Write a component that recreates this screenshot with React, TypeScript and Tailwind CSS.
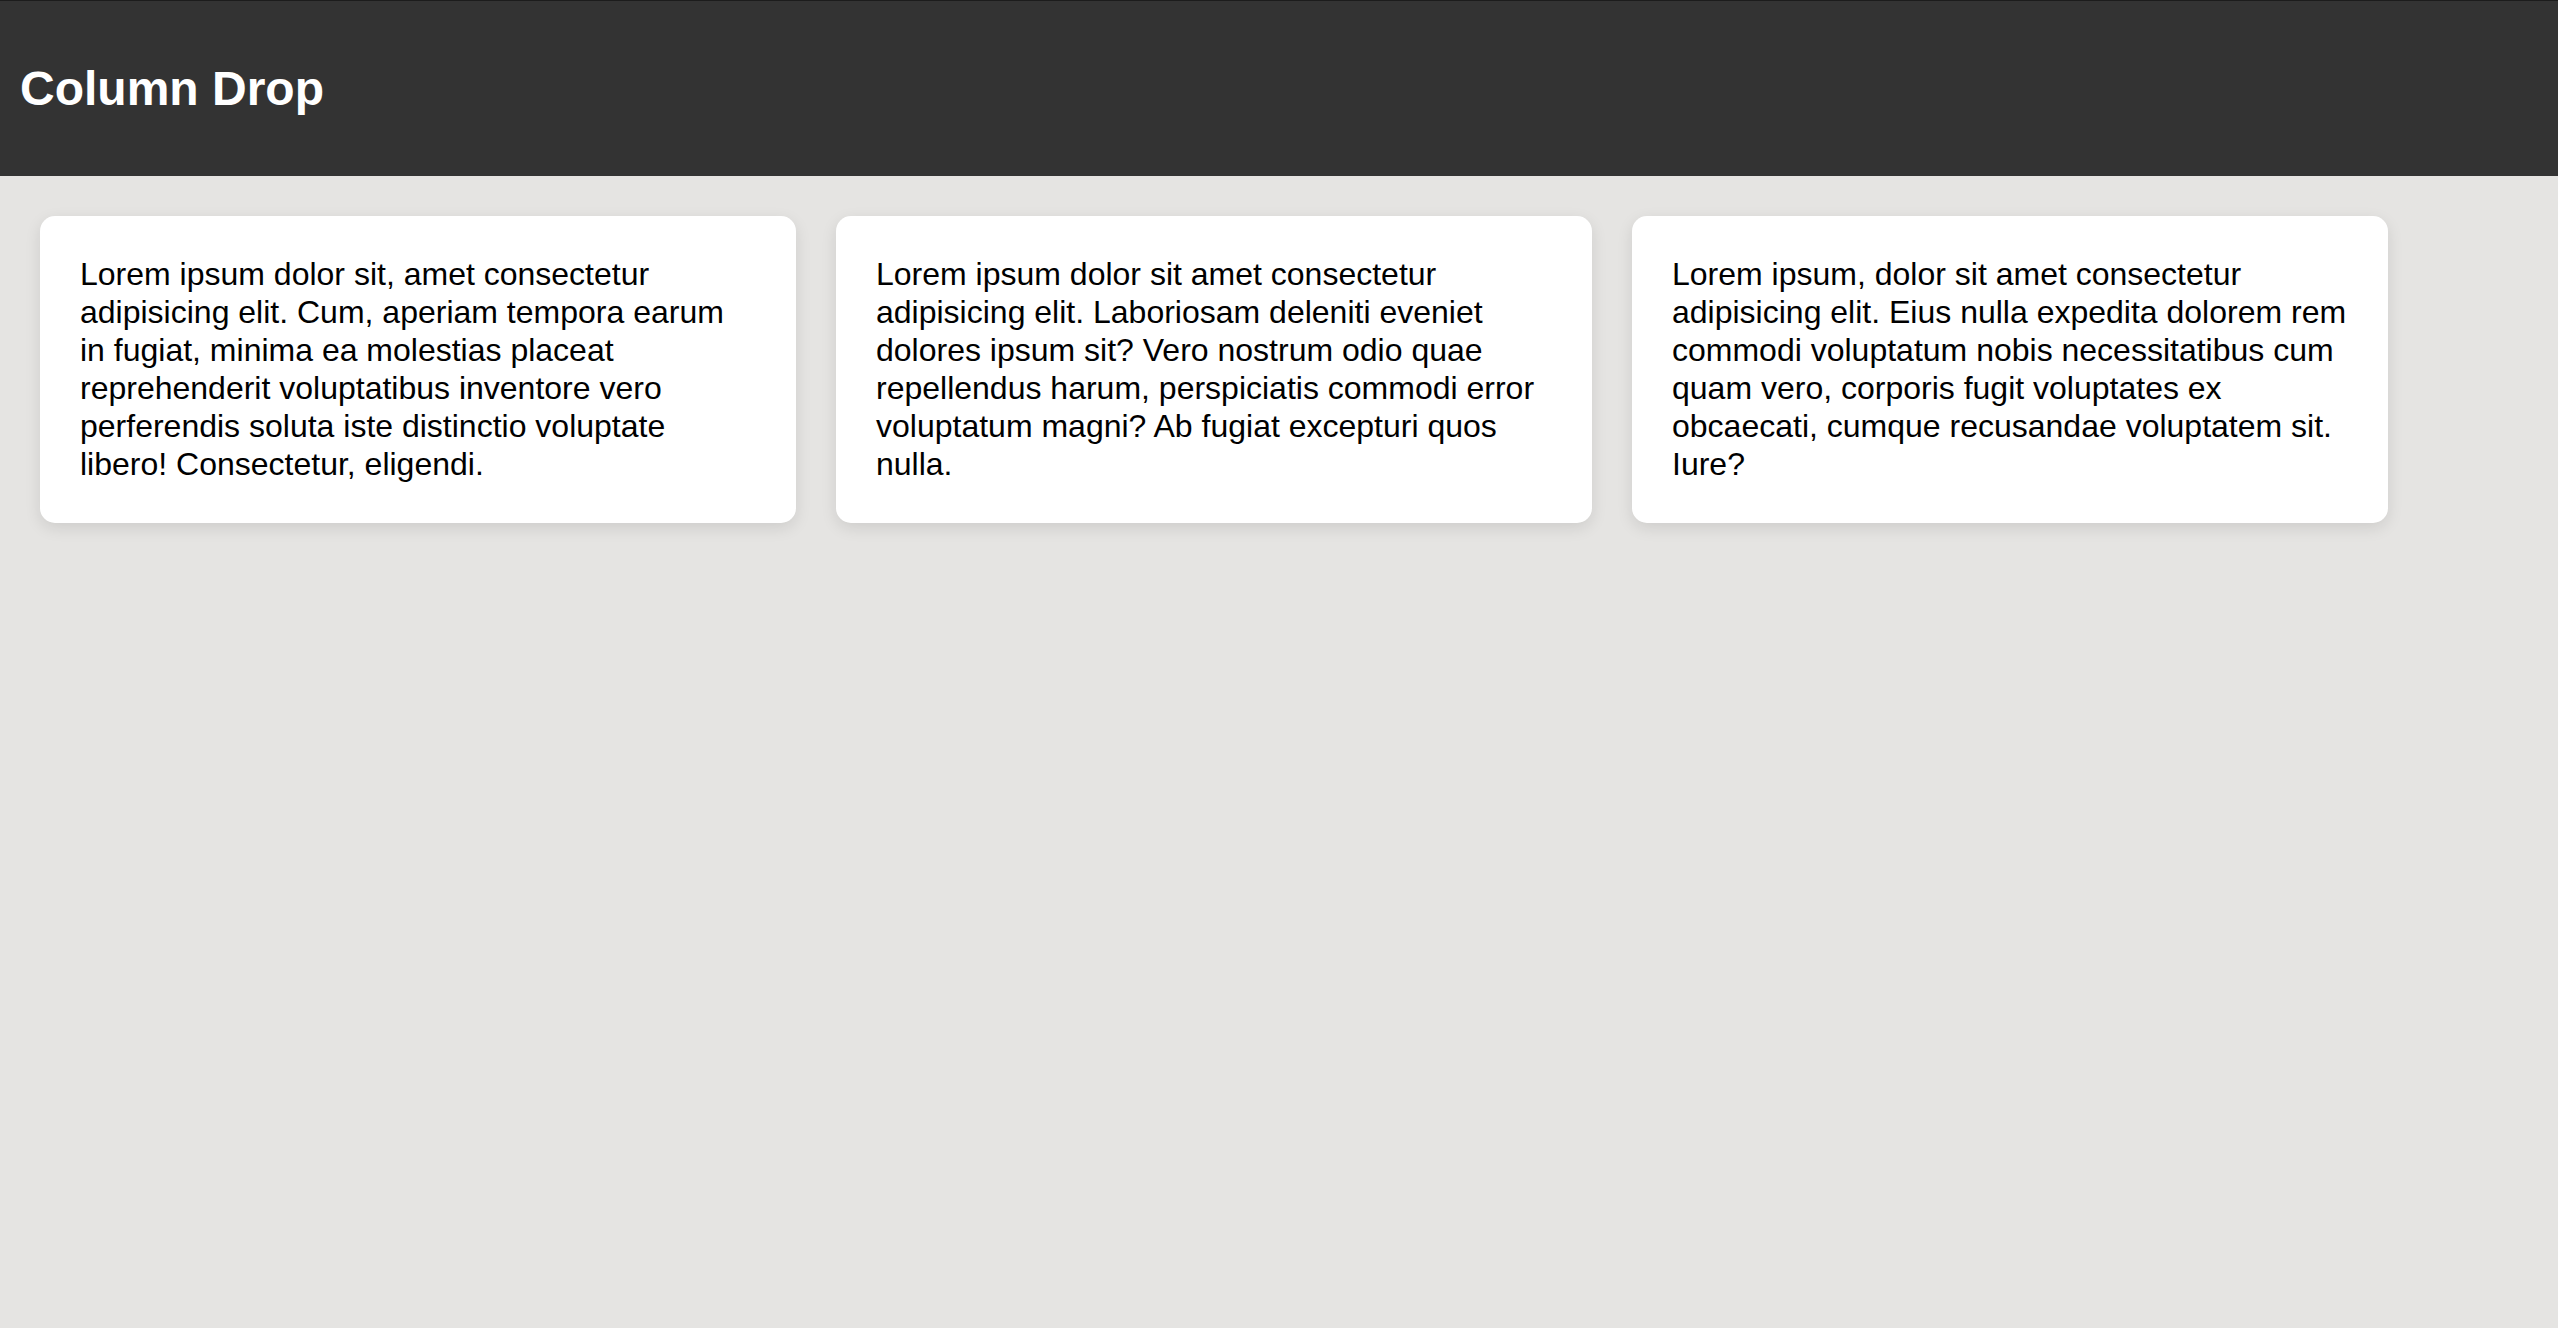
import React from 'react';

const cards: string[] = [
  'Lorem ipsum dolor sit, amet consectetur adipisicing elit. Cum, aperiam tempora earum in fugiat, minima ea molestias placeat reprehenderit voluptatibus inventore vero perferendis soluta iste distinctio voluptate libero! Consectetur, eligendi.',
  'Lorem ipsum dolor sit amet consectetur adipisicing elit. Laboriosam deleniti eveniet dolores ipsum sit? Vero nostrum odio quae repellendus harum, perspiciatis commodi error voluptatum magni? Ab fugiat excepturi quos nulla.',
  'Lorem ipsum, dolor sit amet consectetur adipisicing elit. Eius nulla expedita dolorem rem commodi voluptatum nobis necessitatibus cum quam vero, corporis fugit voluptates ex obcaecati, cumque recusandae voluptatem sit. Iure?',
];

const App: React.FC = () => {
  return (
    <div className="min-h-screen bg-[#e5e4e2] font-['Liberation_Sans',Arial,sans-serif]">
      {/* Header */}
      <header className="h-[176px] bg-[#333333] border-t border-[#1c1c1c] flex items-center pl-[20px]">
        <h1 className="text-[48px] font-bold text-white">Column Drop</h1>
      </header>

      {/* Columns */}
      <main className="flex items-start gap-10 p-10">
        {cards.map((text, i) => (
          <div
            key={i}
            className="w-[756px] shrink-0 bg-white rounded-[15px] p-10 shadow-[0_5px_16px_rgba(0,0,0,0.1)]"
          >
            <p className="text-[32px] leading-[37.9px] text-black">{text}</p>
          </div>
        ))}
      </main>
    </div>
  );
};

export default App;
